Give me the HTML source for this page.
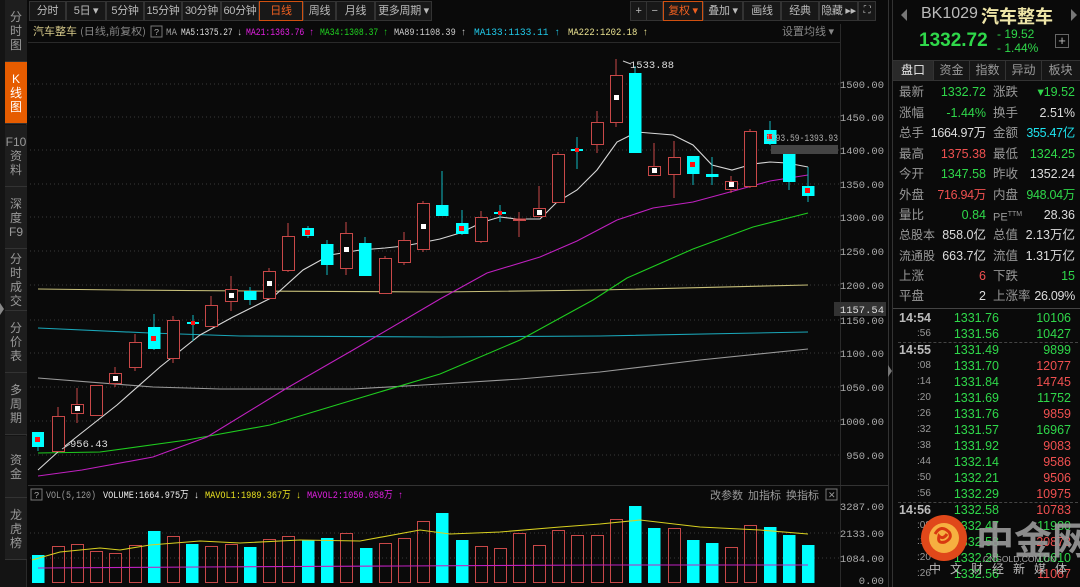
<!DOCTYPE html>
<html><head><meta charset="utf-8"><style>
*{margin:0;padding:0;box-sizing:border-box}
body{width:1080px;height:587px;background:#0a0a0a;overflow:hidden;position:relative;font-family:"Liberation Sans","Noto Sans CJK SC",sans-serif;color:#aaa}
.abs{position:absolute}
.side{left:0;top:0;width:27px;height:587px;background:#141414;border-right:1px solid #2a2a2a}
.tab{position:absolute;left:5px;width:22px;background:#1e1e1e;border-bottom:1px solid #333;color:#999;font-size:12px;line-height:14px;text-align:center;display:flex;flex-direction:column;justify-content:center;align-items:center}
.tab.on{background:#e65c00;color:#fff}
.btn{position:absolute;top:1px;height:20px;background:#181818;border:1px solid #333;color:#bbb;font-size:11px;line-height:18px;text-align:center;white-space:nowrap;overflow:hidden;letter-spacing:-0.3px}
.btn.on{border-color:#d05010;color:#f06020}
.rp{left:892px;top:0;width:188px;height:587px;background:#0a0a0a;border-left:1px solid #333}
.row{position:absolute;left:0;width:188px;height:20px;font-size:12.5px;line-height:20px;white-space:nowrap}
.row span{position:absolute}
.g{color:#2fd84a}.r{color:#f05050}.w{color:#ddd}.c{color:#1ee4f0}.l{color:#999}
.tk{position:absolute;left:0;width:188px;height:16px;font-size:12.5px;line-height:16px}
.tk span{position:absolute}
</style></head><body>

<div class="abs side">
<div class="tab" style="top:0;height:62px">分<br>时<br>图</div>
<div class="tab on" style="top:62px;height:62px">K<br>线<br>图</div>
<div class="tab" style="top:125px;height:62px">F10<br>资<br>料</div>
<div class="tab" style="top:187px;height:62px">深<br>度<br>F9</div>
<div class="tab" style="top:249px;height:62px">分<br>时<br>成<br>交</div>
<div class="tab" style="top:311px;height:62px">分<br>价<br>表</div>
<div class="tab" style="top:373px;height:62px">多<br>周<br>期</div>
<div class="tab" style="top:436px;height:62px">资<br>金</div>
<div class="tab" style="top:498px;height:62px">龙<br>虎<br>榜</div>
</div>
<div class="abs" style="left:0;top:303px;width:0;height:0;border-top:6px solid transparent;border-bottom:6px solid transparent;border-left:4px solid #888"></div>

<div class="btn" style="left:29px;width:37px">分时</div>
<div class="btn" style="left:66px;width:40px">5日 ▾</div>
<div class="btn" style="left:106px;width:38px">5分钟</div>
<div class="btn" style="left:144px;width:38px">15分钟</div>
<div class="btn" style="left:182px;width:39px">30分钟</div>
<div class="btn" style="left:221px;width:38px">60分钟</div>
<div class="btn on" style="left:259px;width:44px">日线</div>
<div class="btn" style="left:303px;width:33px">周线</div>
<div class="btn" style="left:336px;width:39px">月线</div>
<div class="btn" style="left:375px;width:57px">更多周期 ▾</div>
<div class="btn" style="left:630px;width:17px">+</div>
<div class="btn" style="left:646px;width:17px">−</div>
<div class="btn on" style="left:663px;width:40px">复权 ▾</div>
<div class="btn" style="left:703px;width:40px">叠加 ▾</div>
<div class="btn" style="left:743px;width:38px">画线</div>
<div class="btn" style="left:781px;width:38px">经典</div>
<div class="btn" style="left:819px;width:39px">隐藏 ▸▸</div>
<div class="btn" style="left:858px;width:18px;font-size:10px">⛶</div>

<svg class="abs" style="left:0;top:0" width="892" height="587" font-family="Liberation Mono, Noto Sans CJK SC, monospace">
<line x1="888.5" y1="0" x2="888.5" y2="587" stroke="#333"/>
<line x1="840.5" y1="24" x2="840.5" y2="587" stroke="#2a2a2a"/>
<line x1="28" y1="485.5" x2="888" y2="485.5" stroke="#333"/>
<line x1="28" y1="42.5" x2="840" y2="42.5" stroke="#2a2a2a"/>
<g stroke="#3a3a3a" stroke-dasharray="1,3">
<line x1="30" y1="84" x2="840" y2="84"/><line x1="30" y1="117" x2="840" y2="117"/><line x1="30" y1="150" x2="840" y2="150"/><line x1="30" y1="184" x2="840" y2="184"/><line x1="30" y1="217" x2="840" y2="217"/><line x1="30" y1="251" x2="840" y2="251"/><line x1="30" y1="285" x2="840" y2="285"/><line x1="30" y1="320" x2="840" y2="320"/><line x1="30" y1="353" x2="840" y2="353"/><line x1="30" y1="387" x2="840" y2="387"/><line x1="30" y1="421" x2="840" y2="421"/><line x1="30" y1="455" x2="840" y2="455"/>
<line x1="30" y1="533" x2="840" y2="533"/><line x1="30" y1="558" x2="840" y2="558"/>
</g>
<g font-size="10.5" fill="#aaa" text-anchor="end">
<text x="884" y="88">1500.00</text><text x="884" y="121">1450.00</text><text x="884" y="154">1400.00</text><text x="884" y="188">1350.00</text><text x="884" y="221">1300.00</text><text x="884" y="255">1250.00</text><text x="884" y="289">1200.00</text><text x="884" y="324">1150.00</text><text x="884" y="357">1100.00</text><text x="884" y="391">1050.00</text><text x="884" y="425">1000.00</text><text x="884" y="459">950.00</text>
<text x="884" y="510">3287.00</text><text x="884" y="537">2133.00</text><text x="884" y="562">1084.00</text><text x="884" y="584">0.00</text>
</g>
<rect x="834" y="302" width="52" height="14" fill="#333"/>
<text x="884" y="313" font-size="10.5" fill="#ddd" text-anchor="end">1157.54</text>

<!-- legend -->
<g font-size="10">
<text x="33" y="35" fill="#d6c98a" font-size="11" font-family="Noto Sans CJK SC">汽车整车</text>
<text x="80" y="35" fill="#888" font-family="Noto Sans CJK SC" textLength="66" lengthAdjust="spacingAndGlyphs">(日线,前复权)</text>
<rect x="151" y="26" width="11" height="11" fill="none" stroke="#777"/><text x="154" y="35" fill="#aaa" font-size="9">?</text>
<text x="166" y="35" fill="#999" textLength="11" lengthAdjust="spacingAndGlyphs">MA</text>
<text x="181" y="35" fill="#ddd" textLength="61" lengthAdjust="spacingAndGlyphs">MA5:1375.27 ↓</text>
<text x="246" y="35" fill="#e020e0" textLength="68" lengthAdjust="spacingAndGlyphs">MA21:1363.76 ↑</text>
<text x="320" y="35" fill="#20d020" textLength="68" lengthAdjust="spacingAndGlyphs">MA34:1308.37 ↑</text>
<text x="394" y="35" fill="#ccc" textLength="72" lengthAdjust="spacingAndGlyphs">MA89:1108.39 ↑</text>
<text x="474" y="35" fill="#20c8e8" textLength="86" lengthAdjust="spacingAndGlyphs">MA133:1133.11 ↑</text>
<text x="568" y="35" fill="#e8e090" textLength="80" lengthAdjust="spacingAndGlyphs">MA222:1202.18 ↑</text>
<text x="782" y="35" fill="#888" font-family="Noto Sans CJK SC" font-size="11">设置均线 ▾</text>
</g>

<!-- MAs -->
<g fill="none" stroke-width="1.1">
<polyline stroke="#c8c07a" points="38,289 120,290 250,291 440,292 600,290 808,285"/>
<polyline stroke="#1aa6b8" points="38,328 150,333 240,336 440,337 600,336 808,332"/>
<polyline stroke="#9a9a9a" points="38,378 153,387 220,389 353,389 440,384 520,379 600,372 700,360 808,349"/>
<polyline stroke="#1fcc1f" points="38,453 100,452 187,440 270,425 353,400 440,374 520,340 593,300 627,278 693,249 753,227 808,213"/>
<polyline stroke="#c020c0" points="38,476 82,470 153,457 207,437 287,388 353,350 440,299 487,273 540,257 577,241 617,220 653,208 693,202 730,192 770,181 808,175"/>
<polyline stroke="#d8d8d8" points="38,470 60,450 117,405 160,367 200,335 233,317 273,297 303,270 330,255 360,250 385,248 404,246 420,243 440,239 460,233 483,222 500,217 517,219 540,219 557,202 577,190 597,170 617,142 637,132 673,135 693,145 712,165 732,170 753,164 770,162 787,163 808,167"/>
</g>

<!-- candles -->
<g stroke-width="1">
<g stroke="#c84848" fill="#0a0a0a">
<line x1="58" y1="407" x2="58" y2="452"/><rect x="52.5" y="416.5" width="12" height="35"/>
<line x1="77" y1="388" x2="77" y2="423"/><rect x="71.5" y="404.5" width="12" height="9"/>
<line x1="96" y1="385" x2="96" y2="416"/><rect x="90.5" y="385.5" width="12" height="30"/>
<line x1="115" y1="367" x2="115" y2="387"/><rect x="109.5" y="373.5" width="12" height="10"/>
<line x1="135" y1="334" x2="135" y2="371"/><rect x="129.5" y="342.5" width="12" height="25"/>
<line x1="173" y1="316" x2="173" y2="363"/><rect x="167.5" y="320.5" width="12" height="38"/>
<line x1="211" y1="296" x2="211" y2="326"/><rect x="205.5" y="305.5" width="12" height="21"/>
<line x1="231" y1="276" x2="231" y2="311"/><rect x="225.5" y="289.5" width="12" height="12"/>
<line x1="269" y1="268" x2="269" y2="298"/><rect x="263.5" y="271.5" width="12" height="27"/>
<line x1="288" y1="223" x2="288" y2="272"/><rect x="282.5" y="236.5" width="12" height="34"/>
<line x1="346" y1="222" x2="346" y2="275"/><rect x="340.5" y="233.5" width="12" height="35"/>
<line x1="385" y1="256" x2="385" y2="293"/><rect x="379.5" y="258.5" width="12" height="35"/>
<line x1="404" y1="232" x2="404" y2="265"/><rect x="398.5" y="240.5" width="12" height="22"/>
<line x1="423" y1="201" x2="423" y2="252"/><rect x="417.5" y="203.5" width="12" height="46"/>
<line x1="481" y1="211" x2="481" y2="243"/><rect x="475.5" y="217.5" width="12" height="24"/>
<line x1="519" y1="212" x2="519" y2="237"/><rect x="513.5" y="219" width="12" height="1.5" fill="#e07070"/>
<line x1="539" y1="186" x2="539" y2="216"/><rect x="533.5" y="208.5" width="12" height="8"/>
<line x1="558" y1="152" x2="558" y2="202"/><rect x="552.5" y="154.5" width="12" height="48"/>
<line x1="597" y1="111" x2="597" y2="153"/><rect x="591.5" y="122.5" width="12" height="22"/>
<line x1="616" y1="59" x2="616" y2="127"/><rect x="610.5" y="75.5" width="12" height="47"/>
<line x1="654" y1="143" x2="654" y2="175"/><rect x="648.5" y="166.5" width="12" height="9"/>
<line x1="674" y1="141" x2="674" y2="198"/><rect x="668.5" y="157.5" width="12" height="17"/>
<line x1="731" y1="176" x2="731" y2="193"/><rect x="725.5" y="181.5" width="12" height="8"/>
<line x1="750" y1="129" x2="750" y2="188"/><rect x="744.5" y="131.5" width="12" height="55"/>
</g>
<g stroke="#10b8c0" fill="#00ffff">
<line x1="38" y1="447" x2="38" y2="451"/><rect x="32" y="432" width="12" height="15" stroke="none"/>
<line x1="154" y1="314" x2="154" y2="350"/><rect x="148" y="327" width="12.5" height="22" stroke="none"/>
<line x1="193" y1="315" x2="193" y2="341"/><rect x="187" y="322" width="12" height="2" stroke="none"/>
<line x1="250" y1="287" x2="250" y2="305"/><rect x="244" y="291" width="12.5" height="9" stroke="none"/>
<line x1="308" y1="226" x2="308" y2="238"/><rect x="302" y="228" width="12" height="8" stroke="none"/>
<line x1="327" y1="240" x2="327" y2="275"/><rect x="321" y="244" width="12.5" height="21" stroke="none"/>
<line x1="365" y1="237" x2="365" y2="276"/><rect x="359" y="243" width="12.5" height="33" stroke="none"/>
<line x1="442" y1="171" x2="442" y2="216"/><rect x="436" y="205" width="12.5" height="11" stroke="none"/>
<line x1="462" y1="210" x2="462" y2="235"/><rect x="456" y="223" width="12.5" height="11" stroke="none"/>
<line x1="500" y1="205" x2="500" y2="222"/><rect x="494" y="212" width="12" height="2" stroke="none"/>
<line x1="577" y1="137" x2="577" y2="169"/><rect x="571" y="149" width="12" height="2" stroke="none"/>
<line x1="635" y1="66" x2="635" y2="153"/><rect x="629" y="73" width="12.5" height="80" stroke="none"/>
<line x1="693" y1="156" x2="693" y2="185"/><rect x="687" y="156" width="12.5" height="18" stroke="none"/>
<line x1="712" y1="157" x2="712" y2="185"/><rect x="706" y="174" width="12.5" height="3" stroke="none"/>
<line x1="770" y1="121" x2="770" y2="145"/><rect x="764" y="130" width="12.5" height="14" stroke="none"/>
<line x1="789" y1="154" x2="789" y2="190"/><rect x="783" y="154" width="12.5" height="28" stroke="none"/>
<line x1="808" y1="167" x2="808" y2="202"/><rect x="802" y="186" width="12.5" height="10" stroke="none"/>
</g>
<g fill="#ff1010">
<rect x="35" y="437" width="5" height="5"/><rect x="151" y="336" width="5" height="5"/><rect x="191" y="321" width="4" height="4"/><rect x="305" y="230" width="5" height="5"/><rect x="459" y="226" width="5" height="5"/><rect x="498" y="211" width="4" height="4"/><rect x="575" y="148" width="4" height="4"/><rect x="690" y="162" width="5" height="5"/><rect x="767" y="134" width="5" height="5"/><rect x="805" y="188" width="5" height="5"/>
</g>
<g fill="#fff">
<rect x="75" y="406" width="5" height="5"/><rect x="113" y="376" width="5" height="5"/><rect x="229" y="293" width="5" height="5"/><rect x="267" y="281" width="5" height="5"/><rect x="344" y="247" width="5" height="5"/><rect x="421" y="224" width="5" height="5"/><rect x="537" y="210" width="5" height="5"/><rect x="614" y="95" width="5" height="5"/><rect x="652" y="168" width="5" height="5"/><rect x="729" y="182" width="5" height="5"/>
</g>
</g>
<g font-size="10.5" fill="#ddd">
<line x1="623" y1="61" x2="631" y2="64" stroke="#ccc"/><text x="630" y="68">1533.88</text>
<line x1="62" y1="449" x2="70" y2="444" stroke="#ccc"/><text x="70" y="447">956.43</text>
<rect x="771" y="145" width="67" height="9" fill="#444"/>
<text x="766" y="141" fill="#aaa" textLength="72" lengthAdjust="spacingAndGlyphs">1393.59-1393.93</text>
</g>

<!-- volume -->
<g font-size="10">
<rect x="31" y="489" width="11" height="11" fill="none" stroke="#777"/><text x="34" y="498" fill="#aaa" font-size="9">?</text>
<text x="46" y="498" fill="#999" textLength="50" lengthAdjust="spacingAndGlyphs">VOL(5,120)</text>
<text x="103" y="498" fill="#eee" textLength="96" lengthAdjust="spacingAndGlyphs">VOLUME:1664.975万 ↓</text>
<text x="205" y="498" fill="#e8e020" textLength="96" lengthAdjust="spacingAndGlyphs">MAVOL1:1989.367万 ↓</text>
<text x="307" y="498" fill="#e020e0" textLength="96" lengthAdjust="spacingAndGlyphs">MAVOL2:1050.058万 ↑</text>
<text x="710" y="499" fill="#999" font-family="Noto Sans CJK SC" font-size="11">改参数</text>
<text x="748" y="499" fill="#999" font-family="Noto Sans CJK SC" font-size="11">加指标</text>
<text x="786" y="499" fill="#999" font-family="Noto Sans CJK SC" font-size="11">换指标</text>
<rect x="826" y="489" width="11" height="11" fill="none" stroke="#777"/><text x="828" y="498" fill="#999" font-size="9">✕</text>
</g>
<g fill="#00ffff">
<rect x="32" y="555" width="12.5" height="28"/><rect x="148" y="531" width="12.5" height="52"/><rect x="186" y="544" width="12.5" height="39"/><rect x="244" y="547" width="12.5" height="36"/><rect x="302" y="540" width="12.5" height="43"/><rect x="321" y="538" width="12.5" height="45"/><rect x="360" y="548" width="12.5" height="35"/><rect x="436" y="513" width="12.5" height="70"/><rect x="456" y="540" width="12.5" height="43"/><rect x="629" y="506" width="12.5" height="77"/><rect x="648" y="528" width="12.5" height="55"/><rect x="687" y="540" width="12.5" height="43"/><rect x="706" y="543" width="12.5" height="40"/><rect x="764" y="527" width="12.5" height="56"/><rect x="783" y="535" width="12.5" height="48"/><rect x="802" y="545" width="12.5" height="38"/>
</g>
<g fill="none" stroke="#c84848">
<rect x="52.5" y="546.5" width="12" height="36"/><rect x="71.5" y="544.5" width="12" height="38"/><rect x="90.5" y="551.5" width="12" height="31"/><rect x="109.5" y="553.5" width="12" height="29"/><rect x="129.5" y="545.5" width="12" height="37"/><rect x="167.5" y="536.5" width="12" height="46"/><rect x="205.5" y="546.5" width="12" height="36"/><rect x="225.5" y="544.5" width="12" height="38"/><rect x="263.5" y="539.5" width="12" height="43"/><rect x="282.5" y="536.5" width="12" height="46"/><rect x="340.5" y="533.5" width="12" height="49"/><rect x="379.5" y="543.5" width="12" height="39"/><rect x="398.5" y="538.5" width="12" height="44"/><rect x="417.5" y="521.5" width="12" height="61"/><rect x="475.5" y="546.5" width="12" height="36"/><rect x="494.5" y="548.5" width="12" height="34"/><rect x="513.5" y="533.5" width="12" height="49"/><rect x="533.5" y="545.5" width="12" height="37"/><rect x="552.5" y="530.5" width="12" height="52"/><rect x="571.5" y="535.5" width="12" height="47"/><rect x="591.5" y="535.5" width="12" height="47"/><rect x="610.5" y="519.5" width="12" height="63"/><rect x="668.5" y="528.5" width="12" height="54"/><rect x="725.5" y="547.5" width="12" height="35"/><rect x="744.5" y="525.5" width="12" height="57"/>
</g>
<polyline fill="none" stroke="#d8d020" stroke-width="1.1" points="32,560 60,552 100,548 120,550 150,545 200,541 240,543 300,540 360,541 420,530 450,534 500,532 560,527 600,524 640,520 700,527 760,530 808,534"/>
<polyline fill="none" stroke="#c020c0" stroke-width="1.1" points="38,568 200,567 400,566 600,565 808,565"/>
</svg>

<div class="abs rp">
<div class="abs" style="left:8px;top:9px;width:0;height:0;border-top:6px solid transparent;border-bottom:6px solid transparent;border-right:6px solid #777"></div>
<div class="abs" style="left:28px;top:5px;font-size:16px;color:#bbb">BK1029</div>
<div class="abs" style="left:88px;top:3px;font-size:18px;color:#efe6a8;font-weight:bold;font-family:'Noto Sans CJK SC',sans-serif">汽车整车</div>
<div class="abs" style="left:178px;top:9px;width:0;height:0;border-top:6px solid transparent;border-bottom:6px solid transparent;border-left:6px solid #777"></div>
<div class="abs g" style="left:26px;top:30px;font-size:19px;font-weight:bold">1332.72</div>
<div class="abs g" style="left:104px;top:27px;font-size:12px">- 19.52</div>
<div class="abs g" style="left:104px;top:41px;font-size:12px">- 1.44%</div>
<div class="abs" style="left:162px;top:34px;width:14px;height:14px;border:1px solid #666;color:#bbb;font-size:13px;line-height:12px;text-align:center">+</div>
<div class="abs" style="left:0;top:60px;width:188px;height:21px;border-top:1px solid #333;border-bottom:1px solid #333;background:#161616"></div>
<div class="abs" style="left:0;top:61px;width:40px;height:19px;background:#2a2a2a;color:#eee;font-size:12px;line-height:19px;text-align:center">盘口</div>
<div class="abs l" style="left:40px;top:61px;width:36px;font-size:12px;line-height:19px;text-align:center;border-left:1px solid #333">资金</div>
<div class="abs l" style="left:76px;top:61px;width:36px;font-size:12px;line-height:19px;text-align:center;border-left:1px solid #333">指数</div>
<div class="abs l" style="left:112px;top:61px;width:36px;font-size:12px;line-height:19px;text-align:center;border-left:1px solid #333">异动</div>
<div class="abs l" style="left:148px;top:61px;width:38px;font-size:12px;line-height:19px;text-align:center;border-left:1px solid #333">板块</div>

<div class="row" style="top:82px"><span class="l" style="left:6px">最新</span><span class="g" style="right:95px">1332.72</span><span class="l" style="left:100px">涨跌</span><span class="g" style="right:6px">▾19.52</span></div>
<div class="row" style="top:103px"><span class="l" style="left:6px">涨幅</span><span class="g" style="right:95px">-1.44%</span><span class="l" style="left:100px">换手</span><span class="w" style="right:6px">2.51%</span></div>
<div class="row" style="top:123px"><span class="l" style="left:6px">总手</span><span class="w" style="right:95px;letter-spacing:-0.3px">1664.97万</span><span class="l" style="left:100px">金额</span><span class="c" style="right:6px;letter-spacing:-0.3px">355.47亿</span></div>
<div class="row" style="top:144px"><span class="l" style="left:6px">最高</span><span class="r" style="right:95px">1375.38</span><span class="l" style="left:100px">最低</span><span class="g" style="right:6px">1324.25</span></div>
<div class="row" style="top:164px"><span class="l" style="left:6px">今开</span><span class="g" style="right:95px">1347.58</span><span class="l" style="left:100px">昨收</span><span class="w" style="right:6px">1352.24</span></div>
<div class="row" style="top:185px"><span class="l" style="left:6px">外盘</span><span class="r" style="right:95px;letter-spacing:-0.3px">716.94万</span><span class="l" style="left:100px">内盘</span><span class="g" style="right:6px;letter-spacing:-0.3px">948.04万</span></div>
<div class="row" style="top:205px"><span class="l" style="left:6px">量比</span><span class="g" style="right:95px">0.84</span><span class="l" style="left:100px;font-size:11px">PE<sup style="font-size:7px">TTM</sup></span><span class="w" style="right:6px">28.36</span></div>
<div class="row" style="top:225px"><span class="l" style="left:6px;font-size:12px">总股本</span><span class="w" style="right:95px">858.0亿</span><span class="l" style="left:100px">总值</span><span class="w" style="right:6px">2.13万亿</span></div>
<div class="row" style="top:246px"><span class="l" style="left:6px;font-size:12px">流通股</span><span class="w" style="right:95px">663.7亿</span><span class="l" style="left:100px">流值</span><span class="w" style="right:6px">1.31万亿</span></div>
<div class="row" style="top:266px"><span class="l" style="left:6px">上涨</span><span class="r" style="right:95px">6</span><span class="l" style="left:100px">下跌</span><span class="g" style="right:6px">15</span></div>
<div class="row" style="top:286px"><span class="l" style="left:6px">平盘</span><span class="w" style="right:95px">2</span><span class="l" style="left:100px">上涨率</span><span class="w" style="right:6px;letter-spacing:-0.3px">26.09%</span></div>
<div class="abs" style="left:0;top:308px;width:188px;border-top:1px solid #444"></div>

<div class="tk" style="top:310px"><span style="left:6px;color:#bbb;font-weight:bold">14:54</span><span class="g" style="right:82px">1331.76</span><span class="g" style="right:10px">10106</span></div>
<div class="tk" style="top:326px"><span class="l" style="left:24px;font-size:10px">:56</span><span class="g" style="right:82px">1331.56</span><span class="g" style="right:10px">10427</span></div>
<div class="abs" style="left:5px;top:342px;width:180px;border-top:1px dashed #444"></div>
<div class="tk" style="top:342px"><span style="left:6px;color:#bbb;font-weight:bold">14:55</span><span class="g" style="right:82px">1331.49</span><span class="g" style="right:10px">9899</span></div>
<div class="tk" style="top:358px"><span class="l" style="left:24px;font-size:10px">:08</span><span class="g" style="right:82px">1331.70</span><span class="r" style="right:10px">12077</span></div>
<div class="tk" style="top:374px"><span class="l" style="left:24px;font-size:10px">:14</span><span class="g" style="right:82px">1331.84</span><span class="r" style="right:10px">14745</span></div>
<div class="tk" style="top:390px"><span class="l" style="left:24px;font-size:10px">:20</span><span class="g" style="right:82px">1331.69</span><span class="g" style="right:10px">11752</span></div>
<div class="tk" style="top:406px"><span class="l" style="left:24px;font-size:10px">:26</span><span class="g" style="right:82px">1331.76</span><span class="r" style="right:10px">9859</span></div>
<div class="tk" style="top:422px"><span class="l" style="left:24px;font-size:10px">:32</span><span class="g" style="right:82px">1331.57</span><span class="g" style="right:10px">16967</span></div>
<div class="tk" style="top:438px"><span class="l" style="left:24px;font-size:10px">:38</span><span class="g" style="right:82px">1331.92</span><span class="r" style="right:10px">9083</span></div>
<div class="tk" style="top:454px"><span class="l" style="left:24px;font-size:10px">:44</span><span class="g" style="right:82px">1332.14</span><span class="r" style="right:10px">9586</span></div>
<div class="tk" style="top:470px"><span class="l" style="left:24px;font-size:10px">:50</span><span class="g" style="right:82px">1332.21</span><span class="r" style="right:10px">9506</span></div>
<div class="tk" style="top:486px"><span class="l" style="left:24px;font-size:10px">:56</span><span class="g" style="right:82px">1332.29</span><span class="r" style="right:10px">10975</span></div>
<div class="abs" style="left:5px;top:502px;width:180px;border-top:1px dashed #444"></div>
<div class="tk" style="top:502px"><span style="left:6px;color:#bbb;font-weight:bold">14:56</span><span class="g" style="right:82px">1332.58</span><span class="r" style="right:10px">10783</span></div>
<div class="tk" style="top:518px"><span class="l" style="left:24px;font-size:10px">:08</span><span class="g" style="right:82px">1332.47</span><span class="g" style="right:10px">11980</span></div>
<div class="tk" style="top:534px"><span class="l" style="left:24px;font-size:10px">:14</span><span class="g" style="right:82px">1332.58</span><span class="r" style="right:10px">20873</span></div>
<div class="tk" style="top:550px"><span class="l" style="left:24px;font-size:10px">:20</span><span class="g" style="right:82px">1332.28</span><span class="g" style="right:10px">10610</span></div>
<div class="tk" style="top:566px"><span class="l" style="left:24px;font-size:10px">:26</span><span class="g" style="right:82px">1332.56</span><span class="r" style="right:10px">11087</span></div>

<!-- watermark -->
<svg class="abs" style="left:28px;top:512px" width="160" height="75">
<circle cx="23" cy="26" r="23" fill="#e0481a"/>
<circle cx="23" cy="26" r="15" fill="#f6b040"/>
<path d="M14 22 q6 -10 14 -2 q4 6 -4 10 q-8 2 -6 -6 q4 4 8 -2" fill="none" stroke="#d83810" stroke-width="3"/>
<text x="55" y="42" font-size="38" font-weight="bold" fill="#9a9a9a" fill-opacity="0.9" font-family="Noto Sans CJK SC">中金网</text>
<text x="62" y="50" font-size="8.5" fill="#aaa" font-family="Liberation Sans">CNGOLD.COM.CN</text>
<text x="8" y="61" font-size="12" fill="#bbb" letter-spacing="9" font-family="Noto Sans CJK SC">中文财经新媒体</text>
</svg>
</div>
<div class="abs" style="left:888px;top:365px;width:0;height:0;border-top:6px solid transparent;border-bottom:6px solid transparent;border-left:4px solid #777"></div>
</body></html>
